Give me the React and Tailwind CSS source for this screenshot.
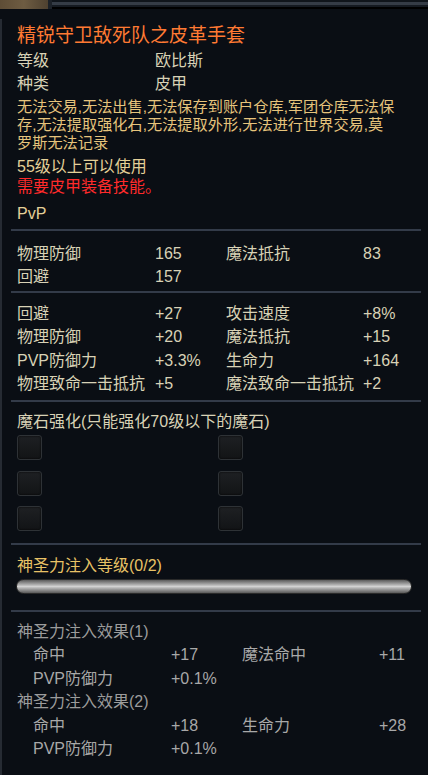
import React from 'react';

const font = { fontFamily: '"Liberation Sans", "Noto Sans CJK SC", sans-serif' };

const Sep = ({ className = '' }) => (
  <div className={`h-[2px] ml-[9px] w-[410px] bg-[#333b49] ${className}`} />
);

const StatRow = ({ row, pad = 'pl-[16px]', color = 'text-[#d8d2b6]', h = 'h-[23.5px]' }) => (
  <div className={`grid grid-cols-[138px_71px_137px_1fr] items-center pt-[4px] ${pad} ${h} ${color} text-[16px] leading-none whitespace-nowrap`}>
    {row.map((c, i) => (
      <span key={i}>{c}</span>
    ))}
  </div>
);

const Slot = () => (
  <div className="w-[25px] h-[25px] rounded-[3px] border border-[#2e3236] bg-gradient-to-b from-[#1e2023] to-[#121416] shadow-[inset_0_0_2px_#000]" />
);

const Line = ({ children, className = '' }) => (
  <div className={`pl-[15px] pt-[4px] flex items-center leading-none whitespace-nowrap ${className}`}>{children}</div>
);

export default function App() {
  const bonus = [
    ['回避', '+27', '攻击速度', '+8%'],
    ['物理防御', '+20', '魔法抵抗', '+15'],
    ['PVP防御力', '+3.3%', '生命力', '+164'],
    ['物理致命一击抵抗', '+5', '魔法致命一击抵抗', '+2'],
  ];

  return (
    <div className="w-[428px] h-[775px] bg-[#0a0e14] overflow-hidden" style={font}>
      {/* frame strip */}
      <div className="h-[9px] flex">
        <div className="w-[48px] bg-gradient-to-r from-[#5e4d36] via-[#6e5c42] to-[#4e4130]" />
        <div className="w-[4px] bg-[#1c2128]" />
        <div className="flex-1 flex flex-col">
          <div className="h-[2px] bg-[#10151b]" />
          <div className="h-[3px] bg-[#353c46]" />
          <div className="h-[2px] bg-[#151a21]" />
          <div className="h-[2px] bg-[#000]" />
        </div>
      </div>

      <div className="border-l-2 border-[#262b33] h-[766px]">
        <Line className="mt-[10px] h-[28px] text-[19px] text-[#ff7a33]">精锐守卫敌死队之皮革手套</Line>

        <div className="grid grid-cols-[138px_1fr] pl-[15px] text-[16px] leading-none text-[#d8d2b6]">
          <span className="h-[23px] pt-[4px] flex items-center">等级</span>
          <span className="h-[23px] pt-[4px] flex items-center">欧比斯</span>
          <span className="h-[23px] pt-[4px] flex items-center">种类</span>
          <span className="h-[23px] pt-[4px] flex items-center">皮甲</span>
        </div>

        <div className="mt-[3px] text-[15.2px] text-[#e6c47c]">
          <Line className="h-[18px]">无法交易,无法出售,无法保存到账户仓库,军团仓库无法保</Line>
          <Line className="h-[18px]">存,无法提取强化石,无法提取外形,无法进行世界交易,莫</Line>
          <Line className="h-[18px]">罗斯无法记录</Line>
        </div>

        <Line className="mt-[5px] h-[20px] text-[16px] text-[#e4d098]">55级以上可以使用</Line>
        <Line className="h-[20px] text-[16px] text-[#ff2b2b]">需要皮甲装备技能。</Line>
        <Line className="mt-[7px] h-[20px] text-[16px] text-[#e4d098]">PvP</Line>

        <Sep className="mt-[7px]" />

        <div className="mt-[9px]">
          <StatRow row={['物理防御', '165', '魔法抵抗', '83']} pad="pl-[15px]" h="h-[23px]" />
          <StatRow row={['回避', '157', '', '']} pad="pl-[15px]" h="h-[23px]" />
        </div>

        <Sep className="mt-[5px]" />

        <div className="mt-[7px]">
          {bonus.map((r, i) => (
            <StatRow key={i} row={r} pad="pl-[15px]" />
          ))}
        </div>

        <Sep className="mt-[6px]" />

        <Line className="mt-[7px] h-[22px] text-[16px] text-[#d8d2b6]">魔石强化(只能强化70级以下的魔石)</Line>

        <div className="mt-[4px] pl-[15px] grid grid-cols-[201px_25px] gap-y-[10.5px]">
          <Slot />
          <Slot />
          <Slot />
          <Slot />
          <Slot />
          <Slot />
        </div>

        <Sep className="mt-[12px]" />

        <Line className="mt-[8px] h-[22px] text-[16px] text-[#e8c266]">神圣力注入等级(0/2)</Line>

        <div className="mt-[4px] ml-[14px] w-[396px] h-[15px] rounded-full border border-[#2a2a2a] bg-gradient-to-b from-[#5c5c5c] via-[#d2d2d2] to-[#5a5a5a]" />

        <Sep className="mt-[16px]" />

        <div className="mt-[6px] text-[16px]">
          <Line className="h-[23.5px] text-[#9c9c9c]">神圣力注入效果(1)</Line>
          <StatRow row={['命中', '+17', '魔法命中', '+11']} pad="pl-[31px]" color="text-[#a8a8a8]" />
          <StatRow row={['PVP防御力', '+0.1%', '', '']} pad="pl-[31px]" color="text-[#a8a8a8]" />
          <Line className="h-[23.5px] text-[#9c9c9c]">神圣力注入效果(2)</Line>
          <StatRow row={['命中', '+18', '生命力', '+28']} pad="pl-[31px]" color="text-[#a8a8a8]" />
          <StatRow row={['PVP防御力', '+0.1%', '', '']} pad="pl-[31px]" color="text-[#a8a8a8]" />
        </div>
      </div>
    </div>
  );
}
